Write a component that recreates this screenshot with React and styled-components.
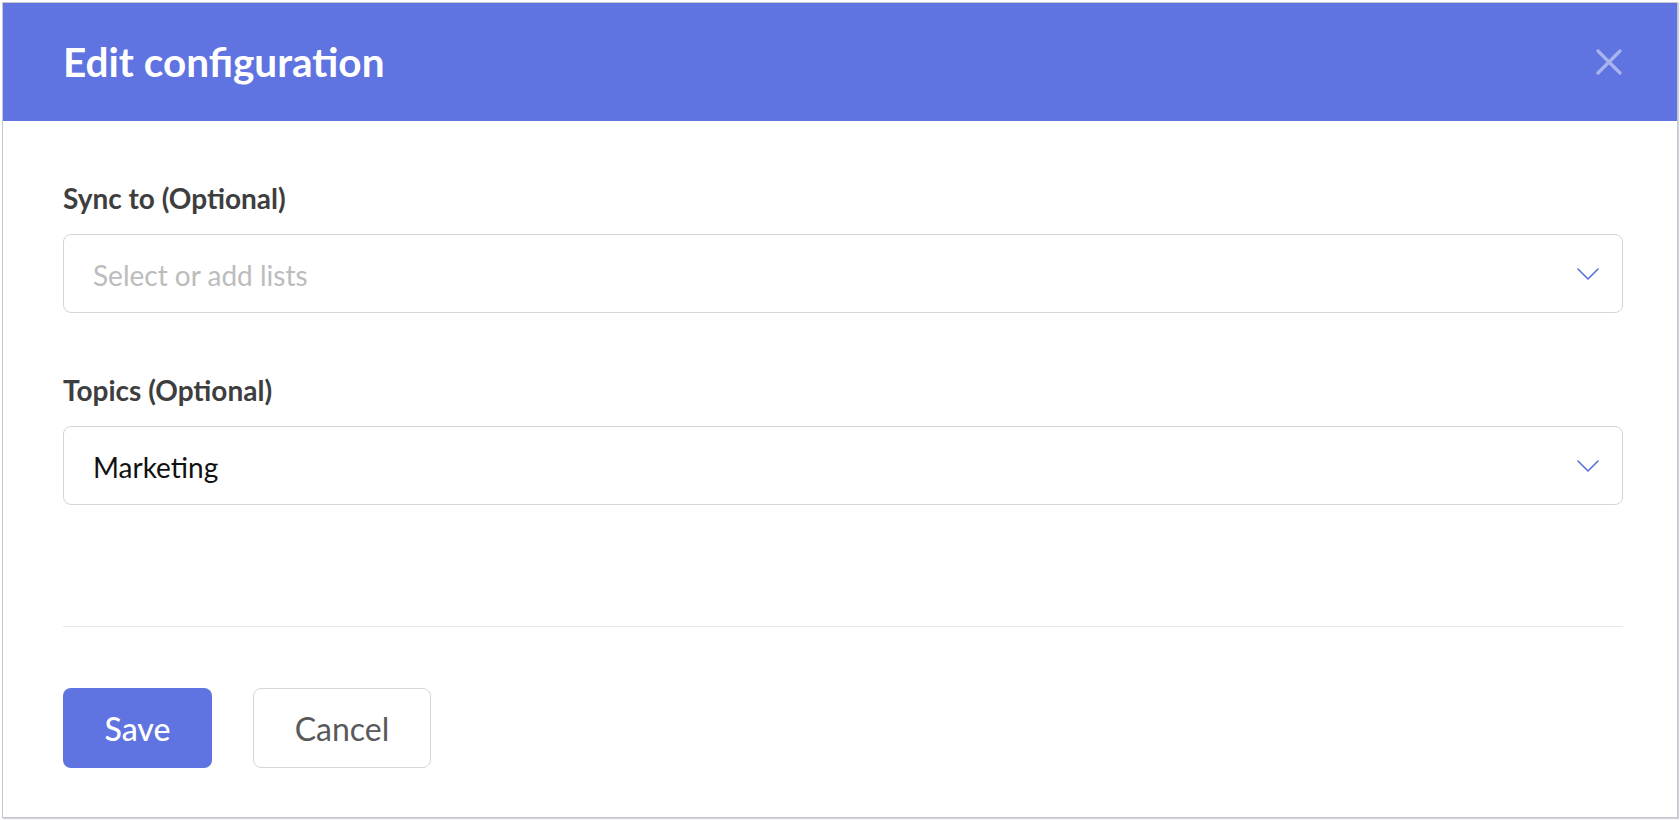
import React from "react";
import styled, { createGlobalStyle } from "styled-components";

const GlobalStyle = createGlobalStyle`
  html, body {
    margin: 0;
    padding: 0;
    background: #ffffff;
  }
  body {
    font-family: "Lato", "Open Sans", "Liberation Sans", sans-serif;
    -webkit-font-smoothing: antialiased;
  }
  * { box-sizing: border-box; }
`;

const Page = styled.div`
  padding: 2px;
  width: 1680px;
  height: 820px;
`;

const Modal = styled.div`
  width: 1676px;
  height: 816px;
  border: 1px solid #c3c7d1;
  box-shadow: 1px 1px 1px rgba(120, 128, 150, 0.35);
  background: #ffffff;
  display: flex;
  flex-direction: column;
`;

const Header = styled.header`
  height: 118px;
  background: #5f74e0;
  display: flex;
  align-items: center;
  justify-content: space-between;
  padding: 0 55px 0 60px;
`;

const Title = styled.h1`
  margin: 0;
  font-family: "Lato", sans-serif;
  font-weight: 700;
  font-size: 40.5px;
  line-height: 48px;
  color: #ffffff;
`;

const CloseButton = styled.button`
  width: 26px;
  height: 26px;
  padding: 0;
  border: 0;
  background: transparent;
  display: flex;
  align-items: center;
  justify-content: center;
  cursor: pointer;
`;

const Body = styled.div`
  flex: 1;
  display: flex;
  flex-direction: column;
  padding: 60px 54px 0 60px;
`;

const Fields = styled.div`
  display: flex;
  flex-direction: column;
  gap: 60px;
`;

const Field = styled.div`
  display: flex;
  flex-direction: column;
  gap: 19px;
`;

const Label = styled.label`
  font-family: "Lato", sans-serif;
  font-weight: 700;
  font-size: 28px;
  line-height: 34px;
  color: #3e3e3e;
`;

const SelectBox = styled.div`
  height: 79px;
  border: 1.5px solid #d5d5d5;
  border-radius: 8px;
  display: flex;
  align-items: center;
  justify-content: space-between;
  padding: 0 23px 0 29px;
  background: #ffffff;
`;

const SelectText = styled.span`
  font-family: "Lato", sans-serif;
  font-size: 28px;
  line-height: 34px;
  padding-top: 2px;
  color: ${(p) => (p.$placeholder ? "#bcbcbc" : "#111111")};
`;

const Divider = styled.hr`
  margin: 121px 0 0 0;
  border: 0;
  border-top: 1.5px solid #e7e7e7;
  height: 0;
`;

const Actions = styled.div`
  display: flex;
  gap: 41px;
  margin-top: 61px;
`;

const Button = styled.button`
  height: 80px;
  border-radius: 8px;
  font-family: "Lato", sans-serif;
  font-size: 32px;
  cursor: pointer;
  display: flex;
  align-items: center;
  justify-content: center;
  padding: 0;
  width: ${(p) => (p.$primary ? "149px" : "178px")};
  background: ${(p) => (p.$primary ? "#5f74e0" : "#ffffff")};
  color: ${(p) => (p.$primary ? "#ffffff" : "#5a5a5a")};
  border: ${(p) => (p.$primary ? "0" : "1.5px solid #d6d6d6")};
  font-weight: ${(p) => (p.$primary ? 500 : 400)};
`;

const Chevron = () => (
  <svg width="22" height="12" viewBox="0 0 22 12" fill="none">
    <polyline
      points="1,1 11,11 21,1"
      stroke="#5b6fd8"
      strokeWidth="1.6"
      strokeLinecap="round"
      strokeLinejoin="round"
    />
  </svg>
);

const CloseIcon = () => (
  <svg width="26" height="26" viewBox="0 0 26 26" fill="none">
    <path
      d="M2 2 L24 24 M24 2 L2 24"
      stroke="#a9b4ef"
      strokeWidth="3.2"
      strokeLinecap="round"
    />
  </svg>
);

const Select = ({ value, placeholder }) => (
  <SelectBox>
    <SelectText $placeholder={!value}>{value || placeholder}</SelectText>
    <Chevron />
  </SelectBox>
);

export default function App() {
  return (
    <>
      <GlobalStyle />
      <Page>
        <Modal>
          <Header>
            <Title>Edit configuration</Title>
            <CloseButton aria-label="Close">
              <CloseIcon />
            </CloseButton>
          </Header>
          <Body>
            <Fields>
              <Field>
                <Label>Sync to (Optional)</Label>
                <Select placeholder="Select or add lists" />
              </Field>
              <Field>
                <Label>Topics (Optional)</Label>
                <Select value="Marketing" />
              </Field>
            </Fields>
            <Divider />
            <Actions>
              <Button $primary>Save</Button>
              <Button>Cancel</Button>
            </Actions>
          </Body>
        </Modal>
      </Page>
    </>
  );
}
